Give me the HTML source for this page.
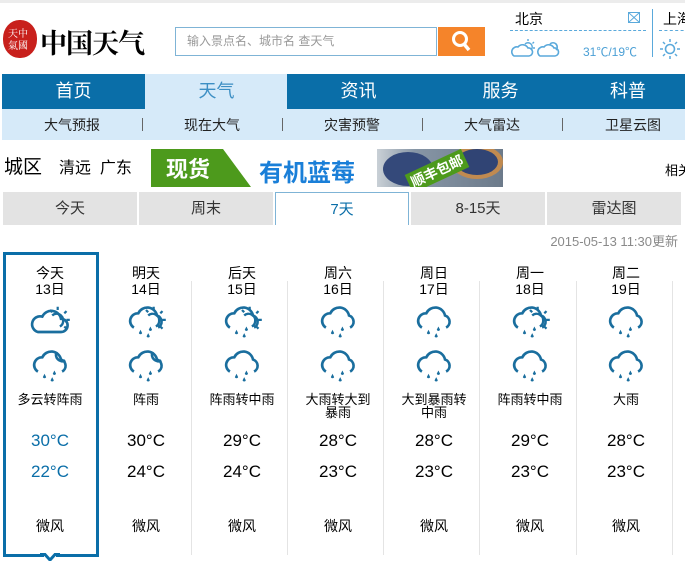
<!DOCTYPE html>
<html><head><meta charset="utf-8"><style>
*{margin:0;padding:0;box-sizing:border-box}
body{width:685px;height:561px;overflow:hidden;background:#fff;font-family:"Liberation Sans","Noto Sans CJK SC",sans-serif;position:relative;color:#000}
.a{position:absolute;white-space:nowrap}
.nav div{position:absolute;top:74px;height:35px;width:143px;text-align:center;line-height:34px;font-size:18px;color:#fff;background:#0a6ea8}
.sub{position:absolute;top:109px;left:2px;width:683px;height:31px;background:#d6eaf9;font-size:14px;color:#222}
.sub span{position:absolute;top:6px}
.sub i{position:absolute;top:9px;width:1px;height:13px;background:#666}
.tab{position:absolute;top:192px;height:33px;background:#e3e3e3;text-align:center;line-height:33px;font-size:15px;color:#333}
.col{position:absolute;top:265px;width:96px;text-align:center;font-size:14px}
.col .d{line-height:16px;height:34px}
.col .ic{height:44px;display:flex;justify-content:center;align-items:center}
.col .ds{font-size:13px;line-height:13px;height:32px;margin-top:6px}
.col .t{font-size:17px;height:31px;line-height:31px}
.col .w{margin-top:29px}
.sep{position:absolute;top:281px;width:1px;height:274px;background:#e4e4e4}
</style></head><body>
<svg width="0" height="0" style="position:absolute">
<defs>
<symbol id="cl" viewBox="0 0 40 32"><path d="M9 26 H30 A6 6 0 0 0 30 14 A9 9 0 0 0 13 12 A7 7 0 0 0 9 26 Z" fill="none" stroke="#1a6e9e" stroke-width="2.4"/></symbol>
<symbol id="sun" viewBox="0 0 40 32"><path d="M22 11 A6 6 0 0 1 32 16 A6 6 0 0 1 29 21" fill="none" stroke="#1a6e9e" stroke-width="2.2"/><path d="M27 3v3M35 7l-2 2M38 15h-3M35 23l-2-2M20 6l2 2" stroke="#1a6e9e" stroke-width="2"/></symbol>
<symbol id="rc" viewBox="0 0 40 32"><path d="M9 22 A7 7 0 0 1 13 9 A9 9 0 0 1 30 11 A6 6 0 0 1 31 22" fill="none" stroke="#1a6e9e" stroke-width="2.4"/><path d="M15 24l-1.5 3a1.6 1.6 0 0 0 3 0z M22 27l-1.5 3a1.6 1.6 0 0 0 3 0z M24 21l-1.5 3a1.6 1.6 0 0 0 3 0z" fill="#1a6e9e"/></symbol>
<symbol id="moon" viewBox="0 0 40 32"><path d="M26 4 A6 6 0 0 0 34 12" fill="none" stroke="#1a6e9e" stroke-width="2.4"/></symbol>
</defs></svg>
<div class="a" style="left:0;top:0;width:685px;height:3px;background:#ececec"></div>
<div class="a" style="left:3px;top:20px;width:34px;height:38px;border-radius:48%;background:#c8201c"></div>
<div class="a" style="left:8px;top:27px;color:#fff;font-size:10px;line-height:12px;font-family:'Noto Serif CJK SC',serif">天中<br>氣國</div>
<div class="a" style="left:40px;top:22px;font-size:27px;font-weight:bold;font-family:'Noto Serif CJK SC',serif;letter-spacing:-1px">中国天气</div>
<div class="a" style="left:175px;top:27px;width:262px;height:29px;border:1px solid #7fb4d6;font-size:12px;color:#999;line-height:27px;padding-left:11px">输入景点名、城市名 查天气</div>
<div class="a" style="left:438px;top:27px;width:47px;height:29px;background:#f5842a"><svg width="47" height="29"><circle cx="22" cy="12" r="6.5" fill="none" stroke="#fff" stroke-width="3"/><path d="M26 17l5 6" stroke="#fff" stroke-width="3.5"/></svg></div>
<div class="a" style="left:515px;top:9px;font-size:14px">北京</div>
<div class="a" style="left:628px;top:12px;width:12px;height:11px;border:1px solid #5aa9db"><svg width="10" height="9" style="display:block"><path d="M0 0L10 9M10 0L0 9" stroke="#5aa9db"/></svg></div>
<div class="a" style="left:510px;top:30px;width:136px;border-top:1px dashed #5aa9db"></div>
<div class="a" style="left:652px;top:9px;width:1px;height:48px;background:#5aa9db"></div>
<div class="a" style="left:663px;top:9px;font-size:14px">上海</div>
<div class="a" style="left:659px;top:30px;width:30px;border-top:1px dashed #5aa9db"></div>
<svg class="a" style="left:511px;top:38px" width="50" height="22"><path d="M3 18H18A4 4 0 0 0 17 10A6 6 0 0 0 7 9A5 5 0 0 0 3 18Z" fill="none" stroke="#5aa9db" stroke-width="1.6"/><path d="M14 6A4 4 0 0 1 20 12M17 1v2M23 4l-1.5 1.5M24 10h-2" stroke="#5aa9db" stroke-width="1.4" fill="none"/><path d="M29 18H44A4 4 0 0 0 43 10A6 6 0 0 0 33 9A5 5 0 0 0 29 18Z" fill="none" stroke="#5aa9db" stroke-width="1.6"/><path d="M39 6A4 4 0 0 1 45 12" stroke="#5aa9db" stroke-width="1.6" fill="none"/></svg>
<div class="a" style="left:583px;top:43px;font-size:12px;color:#4a9fd5">31℃/19℃</div>
<svg class="a" style="left:659px;top:38px" width="22" height="22"><circle cx="11" cy="11" r="4.5" fill="none" stroke="#5aa9db" stroke-width="1.6"/><path d="M11 1v3M11 18v3M1 11h3M18 11h3M4 4l2 2M16 16l2 2M18 4l-2 2M4 18l2-2" stroke="#5aa9db" stroke-width="1.5"/></svg>
<div class="nav"><div style="left:2px">首页</div><div style="left:145px;background:#d6eaf9;color:#3d8fc4">天气</div><div style="left:287px">资讯</div><div style="left:429px">服务</div><div style="left:571px;width:114px">科普</div></div>
<div class="sub"><span style="left:42px">大气预报</span><i style="left:140px"></i><span style="left:182px">现在大气</span><i style="left:280px"></i><span style="left:322px">灾害预警</span><i style="left:420px"></i><span style="left:462px">大气雷达</span><i style="left:560px"></i><span style="left:603px">卫星云图</span></div>
<div class="a" style="left:4px;top:152px;font-size:19px">城区</div>
<div class="a" style="left:59px;top:154px;font-size:16px">清远&nbsp;&nbsp;广东</div>
<div class="a" style="left:151px;top:149px;width:352px;height:38px;background:#fff;overflow:hidden">
<div class="a" style="left:0;top:0;width:100px;height:38px;background:#4d9a1c;clip-path:polygon(0 0,72px 0,100px 38px,0 38px)"></div>
<div class="a" style="left:15px;top:3px;color:#fff;font-size:22px;font-weight:bold">现货</div>
<div class="a" style="left:108px;top:4px;color:#1a7fd8;font-size:24px;font-weight:bold">有机蓝莓</div>
<div class="a" style="left:226px;top:0;width:126px;height:38px;background:linear-gradient(90deg,#c9d0d6,#8796a6 30%,#6c7a8a)"></div>
<div class="a" style="left:232px;top:3px;width:50px;height:34px;border-radius:50%;background:#34497a"></div>
<div class="a" style="left:300px;top:-4px;width:52px;height:34px;border-radius:50%;background:#c08a50"></div>
<div class="a" style="left:305px;top:0;width:42px;height:26px;border-radius:50%;background:#304474"></div>
<div class="a" style="left:255px;top:12px;color:#fff;background:#4d9a1c;font-size:14px;font-weight:bold;transform:rotate(-25deg);padding:0 3px">顺丰包邮</div>
</div>
<div class="a" style="left:665px;top:160px;font-size:13px">相关</div>
<div class="tab" style="left:3px;width:134px">今天</div>
<div class="tab" style="left:139px;width:134px">周末</div>
<div class="tab" style="left:275px;width:134px;background:#fff;border:1px solid #7fb4d6;border-bottom:none;color:#0a6ea8">7天</div>
<div class="tab" style="left:411px;width:134px">8-15天</div>
<div class="tab" style="left:547px;width:134px">雷达图</div>
<div class="a" style="right:7px;top:231px;font-size:13px;color:#8a8a8a">2015-05-13 11:30更新</div>
<div class="a" style="left:3px;top:252px;width:96px;height:305px;border:3px solid #0a6ea8"></div>
<div class="a" style="left:44px;top:553px;width:12px;height:8px;background:#fff"></div>
<svg class="a" style="left:40px;top:553px" width="20" height="8"><path d="M0 1.5H5L10 7L15 1.5H20" fill="none" stroke="#0a6ea8" stroke-width="3"/></svg>
<div class="sep" style="left:191px"></div><div class="sep" style="left:287px"></div><div class="sep" style="left:383px"></div><div class="sep" style="left:479px"></div><div class="sep" style="left:576px"></div><div class="sep" style="left:672px"></div>

<div class="col" style="left:2px"><div class="d">今天<br>13日</div><div class="ic"><svg width="44" height="36"><use href="#sun"/><use href="#cl"/></svg></div><div class="ic"><svg width="44" height="36"><use href="#moon"/><use href="#rc"/></svg></div><div class="ds">多云转阵雨</div><div class="t" style="color:#0a6ea8">30°C</div><div class="t" style="color:#0a6ea8">22°C</div><div class="w">微风</div></div>
<div class="col" style="left:98px"><div class="d">明天<br>14日</div><div class="ic"><svg width="44" height="36"><use href="#sun"/><use href="#rc"/></svg></div><div class="ic"><svg width="44" height="36"><use href="#moon"/><use href="#rc"/></svg></div><div class="ds">阵雨</div><div class="t">30°C</div><div class="t">24°C</div><div class="w">微风</div></div>
<div class="col" style="left:194px"><div class="d">后天<br>15日</div><div class="ic"><svg width="44" height="36"><use href="#sun"/><use href="#rc"/></svg></div><div class="ic"><svg width="44" height="36"><use href="#rc"/></svg></div><div class="ds">阵雨转中雨</div><div class="t">29°C</div><div class="t">24°C</div><div class="w">微风</div></div>
<div class="col" style="left:290px"><div class="d">周六<br>16日</div><div class="ic"><svg width="44" height="36"><use href="#rc"/></svg></div><div class="ic"><svg width="44" height="36"><use href="#rc"/></svg></div><div class="ds">大雨转大到<br>暴雨</div><div class="t">28°C</div><div class="t">23°C</div><div class="w">微风</div></div>
<div class="col" style="left:386px"><div class="d">周日<br>17日</div><div class="ic"><svg width="44" height="36"><use href="#rc"/></svg></div><div class="ic"><svg width="44" height="36"><use href="#rc"/></svg></div><div class="ds">大到暴雨转<br>中雨</div><div class="t">28°C</div><div class="t">23°C</div><div class="w">微风</div></div>
<div class="col" style="left:482px"><div class="d">周一<br>18日</div><div class="ic"><svg width="44" height="36"><use href="#sun"/><use href="#rc"/></svg></div><div class="ic"><svg width="44" height="36"><use href="#rc"/></svg></div><div class="ds">阵雨转中雨</div><div class="t">29°C</div><div class="t">23°C</div><div class="w">微风</div></div>
<div class="col" style="left:578px"><div class="d">周二<br>19日</div><div class="ic"><svg width="44" height="36"><use href="#rc"/></svg></div><div class="ic"><svg width="44" height="36"><use href="#rc"/></svg></div><div class="ds">大雨</div><div class="t">28°C</div><div class="t">23°C</div><div class="w">微风</div></div>
</body></html>
